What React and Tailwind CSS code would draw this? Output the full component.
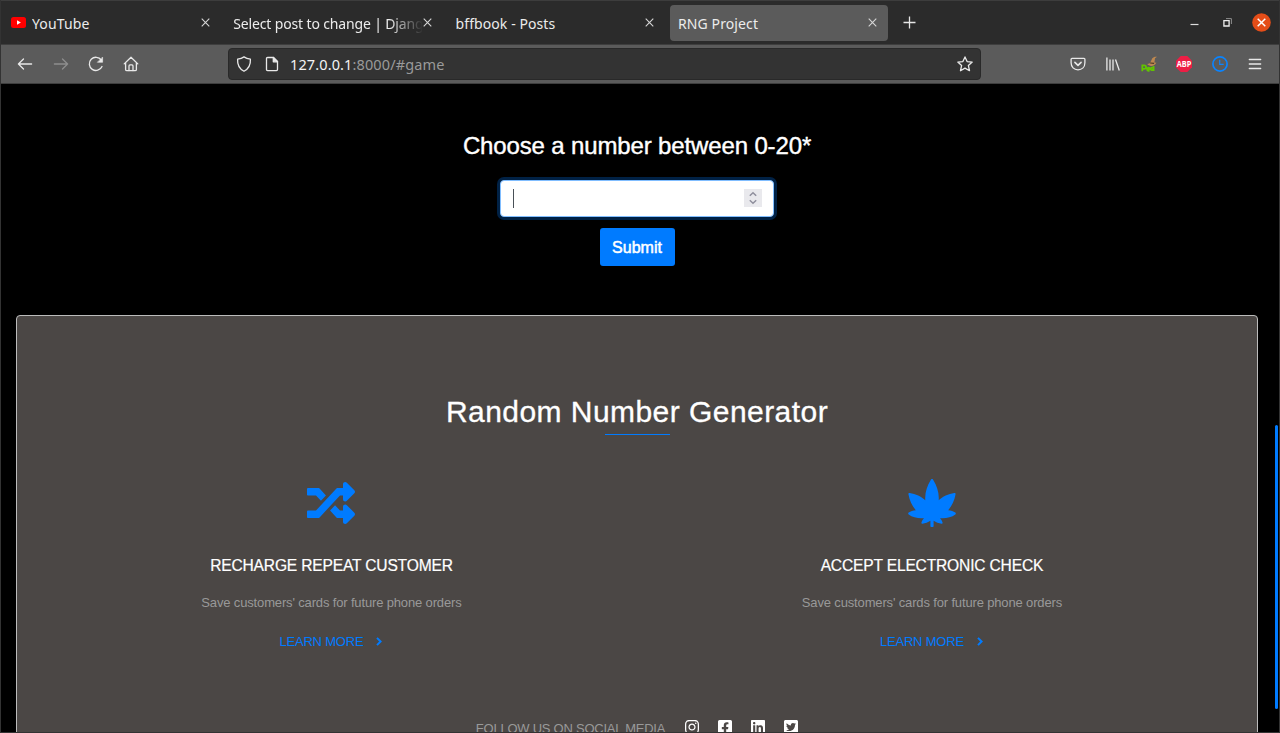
import React from "react";
import {
  FaRandom,
  FaInstagram,
  FaFacebookSquare,
  FaLinkedin,
  FaTwitterSquare,
} from "react-icons/fa";

function Icon({ size = 16, className = "", children }) {
  return (
    <svg
      width={size}
      height={size}
      viewBox="0 0 16 16"
      fill="none"
      stroke="currentColor"
      strokeWidth="1.3"
      strokeLinecap="round"
      strokeLinejoin="round"
      className={`shrink-0 ${className}`}
    >
      {children}
    </svg>
  );
}

function LeafIcon({ className }) {
  return (
    <svg viewBox="0 0 48 48" fill="currentColor" className={className}>
      <path d="M24 0C24.700 0 25 .6 25.400 1.200C29 7 31.300 14 30.700 21.200C34.500 17.600 40.500 14.800 46.300 14C47.500 13.900 47.700 14.600 47.500 15.600C46.500 21.500 44 27 40.200 31.200C43 31.400 45.500 32.100 47.300 33.600C48 34.200 48 34.900 47.300 35.500C43.500 38.500 37.500 39.700 32 39.200C33.200 40.400 34.200 42 34.600 43.700C34.700 44.400 34.300 44.800 33.600 44.700C30.700 44.300 28 43.200 25.600 41.700V47.200C25.600 47.700 25.300 48 24.800 48H23.200C22.700 48 22.400 47.700 22.400 47.200V41.700C20 43.200 17.300 44.300 14.400 44.700C13.700 44.800 13.300 44.400 13.400 43.700C13.800 42 14.800 40.400 16 39.200C10.500 39.700 4.500 38.500.7 35.500C0 34.900 0 34.200.7 33.600C2.500 32.100 5 31.400 7.800 31.200C4 27 1.500 21.500.5 15.600C.3 14.600.5 13.900 1.700 14C7.500 14.800 13.500 17.600 17.300 21.200C16.700 14 19 7 22.600 1.200C23 .6 23.300 0 24 0z" />
    </svg>
  );
}

function CloseMark() {
  return (
    <svg width="9" height="9" viewBox="0 0 9 9" stroke="#d6d6d6" strokeWidth="1.1" className="shrink-0">
      <path d="M.7.7l7.6 7.6M8.3.7L.7 8.3" />
    </svg>
  );
}

function Tab({ title, active, icon, fade, spacing }) {
  return (
    <div
      className={`flex h-9 w-[218.3px] shrink-0 items-center pl-2 pr-[11.5px] ${
        active ? "rounded-[4px] bg-[#5b5b5b]" : ""
      }`}
    >
      {icon}
      <span
        className={`min-w-0 flex-1 overflow-hidden whitespace-nowrap pt-px text-[14px] leading-[21px] text-[#ececec] ${spacing} ${
          fade ? "[mask-image:linear-gradient(to_right,black_82%,transparent_100%)]" : ""
        }`}
      >
        {title}
      </span>
      <CloseMark />
    </div>
  );
}

function TabBar() {
  return (
    <div className="flex h-[44px] shrink-0 items-center border-t border-[#3d3d3d] bg-[#2b2b2b] pl-[2px]">
      <div className="flex gap-1">
        <Tab
          title="YouTube"
          spacing="tracking-[0.12px]"
          icon={
            <svg width="15" height="11" viewBox="0 0 15 11" className="mr-[6px] shrink-0">
              <rect width="15" height="11" rx="2.5" fill="#f00" />
              <path d="M6 3.2v4.6L9.900 5.500z" fill="#fff" />
            </svg>
          }
        />
        <Tab title="Select post to change | Django" fade spacing="tracking-[-0.15px]" />
        <Tab title="bffbook - Posts" spacing="tracking-[0.08px]" />
        <Tab title="RNG Project" active spacing="tracking-[0.12px]" />
      </div>
      <svg width="13" height="13" viewBox="0 0 13 13" stroke="#e6e6e6" strokeWidth="1.3" className="ml-[15px]">
        <path d="M6.500.5v12M.5 6.500h12" />
      </svg>
      <div className="ml-auto flex items-center pr-[8px]">
        <svg width="9" height="9" viewBox="0 0 9 9" className="mr-[24px]">
          <path d="M.5 6.500h8" stroke="#ddd" strokeWidth="1.2" />
        </svg>
        <svg width="9" height="9" viewBox="0 0 9 9" fill="none" className="mr-[20px]">
          <path d="M3 .6h5.400V6" stroke="#8e8e8e" strokeWidth="1" />
          <path d="M.9 2.700h5.200v5.300H.9z" stroke="#eee" strokeWidth="1.300" />
        </svg>
        <svg width="19" height="19" viewBox="0 0 19 19">
          <circle cx="9.500" cy="9.500" r="9.300" fill="#e44d18" />
          <path d="M5.700 5.700l7.600 7.600M13.300 5.700l-7.600 7.600" stroke="#fff" strokeWidth="1.500" />
        </svg>
      </div>
    </div>
  );
}

function Toolbar() {
  return (
    <div className="flex h-[40px] shrink-0 items-center border-y border-[#3e3e3e] bg-[#5b5b5b] pl-4 pr-[16px] text-[#e9e9e9]">
      <Icon>
        <path d="M14.600 8H1.400M6.500 3L1.400 8l5.100 5" />
      </Icon>
      <Icon className="ml-[20px] text-[#8e8e8e]">
        <path d="M1.400 8h13.200M9.500 3l5.100 5-5.100 5" />
      </Icon>
      <Icon className="ml-[19px]">
        <path d="M14 10.500A6.600 6.600 0 1 1 13.300 4" />
        <path d="M14.600 1.400V6.300H9.700z" fill="currentColor" strokeWidth=".6" />
      </Icon>
      <Icon className="ml-[19px]">
        <path d="M1.200 7.900L8 1.300l6.800 6.600M2.600 6.800v6.600c0 .8.500 1.300 1.300 1.300h8.200c.8 0 1.300-.5 1.300-1.300V6.800" />
        <path d="M6 14.500V10c0-.7.400-1.200 1-1.200h2c.6 0 1 .5 1 1.200v4.500" />
      </Icon>
      <div className="ml-[89px] flex h-[32px] w-[753px] items-center rounded-[4px] border border-[#292929] bg-[#333] pl-[7px] pr-[7px]">
        <Icon>
          <path d="M8 .9c1.800 1.300 4 2 6.400 2.300.3 4.800-1.300 9.300-6.400 12-5.100-2.700-6.700-7.200-6.400-12C4 2.900 6.200 2.200 8 .9z" />
        </Icon>
        <Icon className="ml-[12px]">
          <path d="M3.600 1.500H9.500L13.500 5.500v8c0 .7-.4 1.100-1.100 1.100H3.600c-.7 0-1.100-.4-1.100-1.100V2.600c0-.7.4-1.100 1.100-1.100z" />
          <path d="M9.300 1.500v4.300h4.200z" fill="currentColor" />
        </Icon>
        <span className="ml-[10px] text-[14.500px] leading-5 tracking-[0.12px] text-[#9a9a9a]">
          <span className="text-[#f4f4f4]">127.0.0.1</span>:8000/#game
        </span>
        <Icon className="ml-auto">
          <path d="M8 .9l2.100 4.700 5.100.5-3.800 3.500 1.100 5.100L8 12.100l-4.500 2.600 1.100-5.100L.8 6.100l5.100-.5z" />
        </Icon>
      </div>
      <div className="ml-auto flex items-center gap-[19.500px]">
        <Icon>
          <path d="M2 2.400h12c.5 0 .9.400.9.900v3.500C14.900 11 12 13.800 8 13.800S1.100 11 1.100 6.800V3.300c0-.5.400-.9.900-.9z" />
          <path d="M4.900 6.400L8 9.300l3.100-2.900" strokeWidth="1.600" />
        </Icon>
        <Icon>
          <path d="M1.900 1.500v13M5 3.500v11M8 3.500v11M10.500 3.500l3.800 11" strokeLinecap="butt" />
        </Icon>
        <svg width="16" height="16" viewBox="0 0 16 16" className="shrink-0">
          <path
            d="M1.300 15.200V9.300h2a1.600 1.600 0 0 1 0 3.500H1.500M6.300 13.200h2.600a1.400 1.500 0 1 0-.4 1.100M12.600 15V10M12.200 12.700a1.200 1.300 0 1 0 0 .4"
            fill="none"
            stroke="#62c400"
            strokeWidth="1.800"
          />
          <path d="M6.200 8.100C8 8 8.600 7.600 9.300 6.600l2-4.300C12.300 1 14 .5 16 .8l-2 1.400-.6 4.200 2 .3c-1 2-2.900 3.200-4.900 3.200-2 0-3.400-.8-4.300-1.800z" fill="#bd8850" />
          <path d="M9.100 7l4 .3" stroke="#4b3828" strokeWidth="1.200" />
        </svg>
        <svg width="16" height="16" viewBox="0 0 16 16" className="shrink-0">
          <path d="M4.700 0h6.600L16 4.700v6.600L11.300 16H4.700L0 11.300V4.700z" fill="#ed1e45" />
          <text x="8" y="11" textAnchor="middle" textLength="14.500" lengthAdjust="spacingAndGlyphs" fill="#fff" fontSize="8.500" fontWeight="700" fontFamily="Open Sans, sans-serif">
            ABP
          </text>
        </svg>
        <svg width="16" height="16" viewBox="0 0 16 16" fill="none" stroke="#0a84ff" className="shrink-0">
          <circle cx="8" cy="8" r="7.100" strokeWidth="1.700" />
          <path d="M7.700 3.800v4.500h4" strokeWidth="1.200" />
        </svg>
        <Icon>
          <path d="M2.300 3.500h11.400M2.300 8h11.400M2.300 12.500h11.400" />
        </Icon>
      </div>
    </div>
  );
}

function NumberForm() {
  return (
    <section className="flex w-[1272px] flex-col items-center pt-[44px]">
      <h4 className="h-9 text-[24px] leading-9 tracking-[-0.14px] text-white [-webkit-text-stroke:0.4px_white]">
        Choose a number between 0-20*
      </h4>
      <div className="mt-[16px] flex h-[37px] w-[274px] items-center justify-between rounded-[4px] border border-[#80bdff] bg-white pl-3 pr-[11.500px] shadow-[0_0_0_3px_rgba(0,123,255,0.27)]">
        <span className="h-[19px] w-px bg-[#495057]" />
        <span className="mb-px flex h-[18px] w-[18px] items-center justify-center bg-[#e9e9ed]">
          <svg width="8" height="14" viewBox="0 0 8 14" fill="none" stroke="#8f8f9d" strokeWidth="1.500">
            <path d="M.8 4.700L4 1.700l3.200 3M.8 9.300L4 12.300l3.200-3" />
          </svg>
        </span>
      </div>
      <button className="mt-[11px] h-[38px] w-[75px] rounded-[3px] bg-[#007bff] pt-px text-[16px] text-white [-webkit-text-stroke:0.5px_white]">
        Submit
      </button>
    </section>
  );
}

function Service({ icon: ServiceIcon, title }) {
  return (
    <div className="flex w-[600.500px] flex-col items-center">
      <ServiceIcon className="h-12 w-12 text-[#007bff]" />
      <h5 className="mt-[27px] h-6 whitespace-nowrap text-[15.600px] leading-6 tracking-[-0.180px] text-white [-webkit-text-stroke:0.2px_white]">
        {title}
      </h5>
      <p className="mt-[15px] h-5 whitespace-nowrap text-[13px] leading-5 tracking-[-0.150px] text-[#999]">
        Save customers' cards for future phone orders
      </p>
      <a className="mt-[19px] flex h-5 items-center whitespace-nowrap text-[13px] leading-5 tracking-[-0.200px] text-[#007bff]">
        LEARN MORE
        <svg width="6" height="9" viewBox="0 0 6 9" fill="none" stroke="currentColor" strokeWidth="2" className="mb-px ml-[13px] mr-px">
          <path d="M1 .9l3.600 3.600L1 8.100" />
        </svg>
      </a>
    </div>
  );
}

function ServicesCard() {
  return (
    <section className="ml-[15px] mt-[49px] h-[440px] w-[1242px] shrink-0 rounded-[4px] border border-[#bcbcbc] bg-[#4b4745]">
      <div className="flex flex-col items-center pt-[76px]">
        <h2 className="h-10 whitespace-nowrap text-[30px] leading-10 tracking-[0.450px] text-white [-webkit-text-stroke:0.3px_white]">
          Random Number Generator
        </h2>
        <div className="mt-[2px] h-px w-[65px] bg-[#007bff]" />
      </div>
      <div className="mt-[44px] flex pl-[14.200px]">
        <Service icon={FaRandom} title="RECHARGE REPEAT CUSTOMER" />
        <Service icon={LeafIcon} title="ACCEPT ELECTRONIC CHECK" />
      </div>
      <div className="mt-[65px] flex h-5 items-center justify-center pl-px">
        <span className="mr-[18.500px] whitespace-nowrap pt-[3px] text-[13px] leading-5 tracking-[-0.240px] text-[#999]">
          FOLLOW US ON SOCIAL MEDIA
        </span>
        <div className="flex gap-[17.200px] text-white">
          <FaInstagram className="h-4 w-4" />
          <FaFacebookSquare className="h-4 w-4" />
          <FaLinkedin className="h-4 w-4" />
          <FaTwitterSquare className="h-4 w-4" />
        </div>
      </div>
    </section>
  );
}

export default function App() {
  return (
    <div className="flex h-[733px] w-[1280px] flex-col overflow-hidden border-x border-b border-[#333] bg-black font-['Noto_Sans',sans-serif]">
      <TabBar />
      <Toolbar />
      <main className="flex min-h-0 flex-1 justify-between overflow-hidden font-['Liberation_Sans',Arial,sans-serif]">
        <div className="flex flex-col">
          <NumberForm />
          <ServicesCard />
        </div>
        <div className="mr-px mt-[341px] h-[284px] w-[3px] rounded-sm bg-[#007bff]" />
      </main>
    </div>
  );
}
